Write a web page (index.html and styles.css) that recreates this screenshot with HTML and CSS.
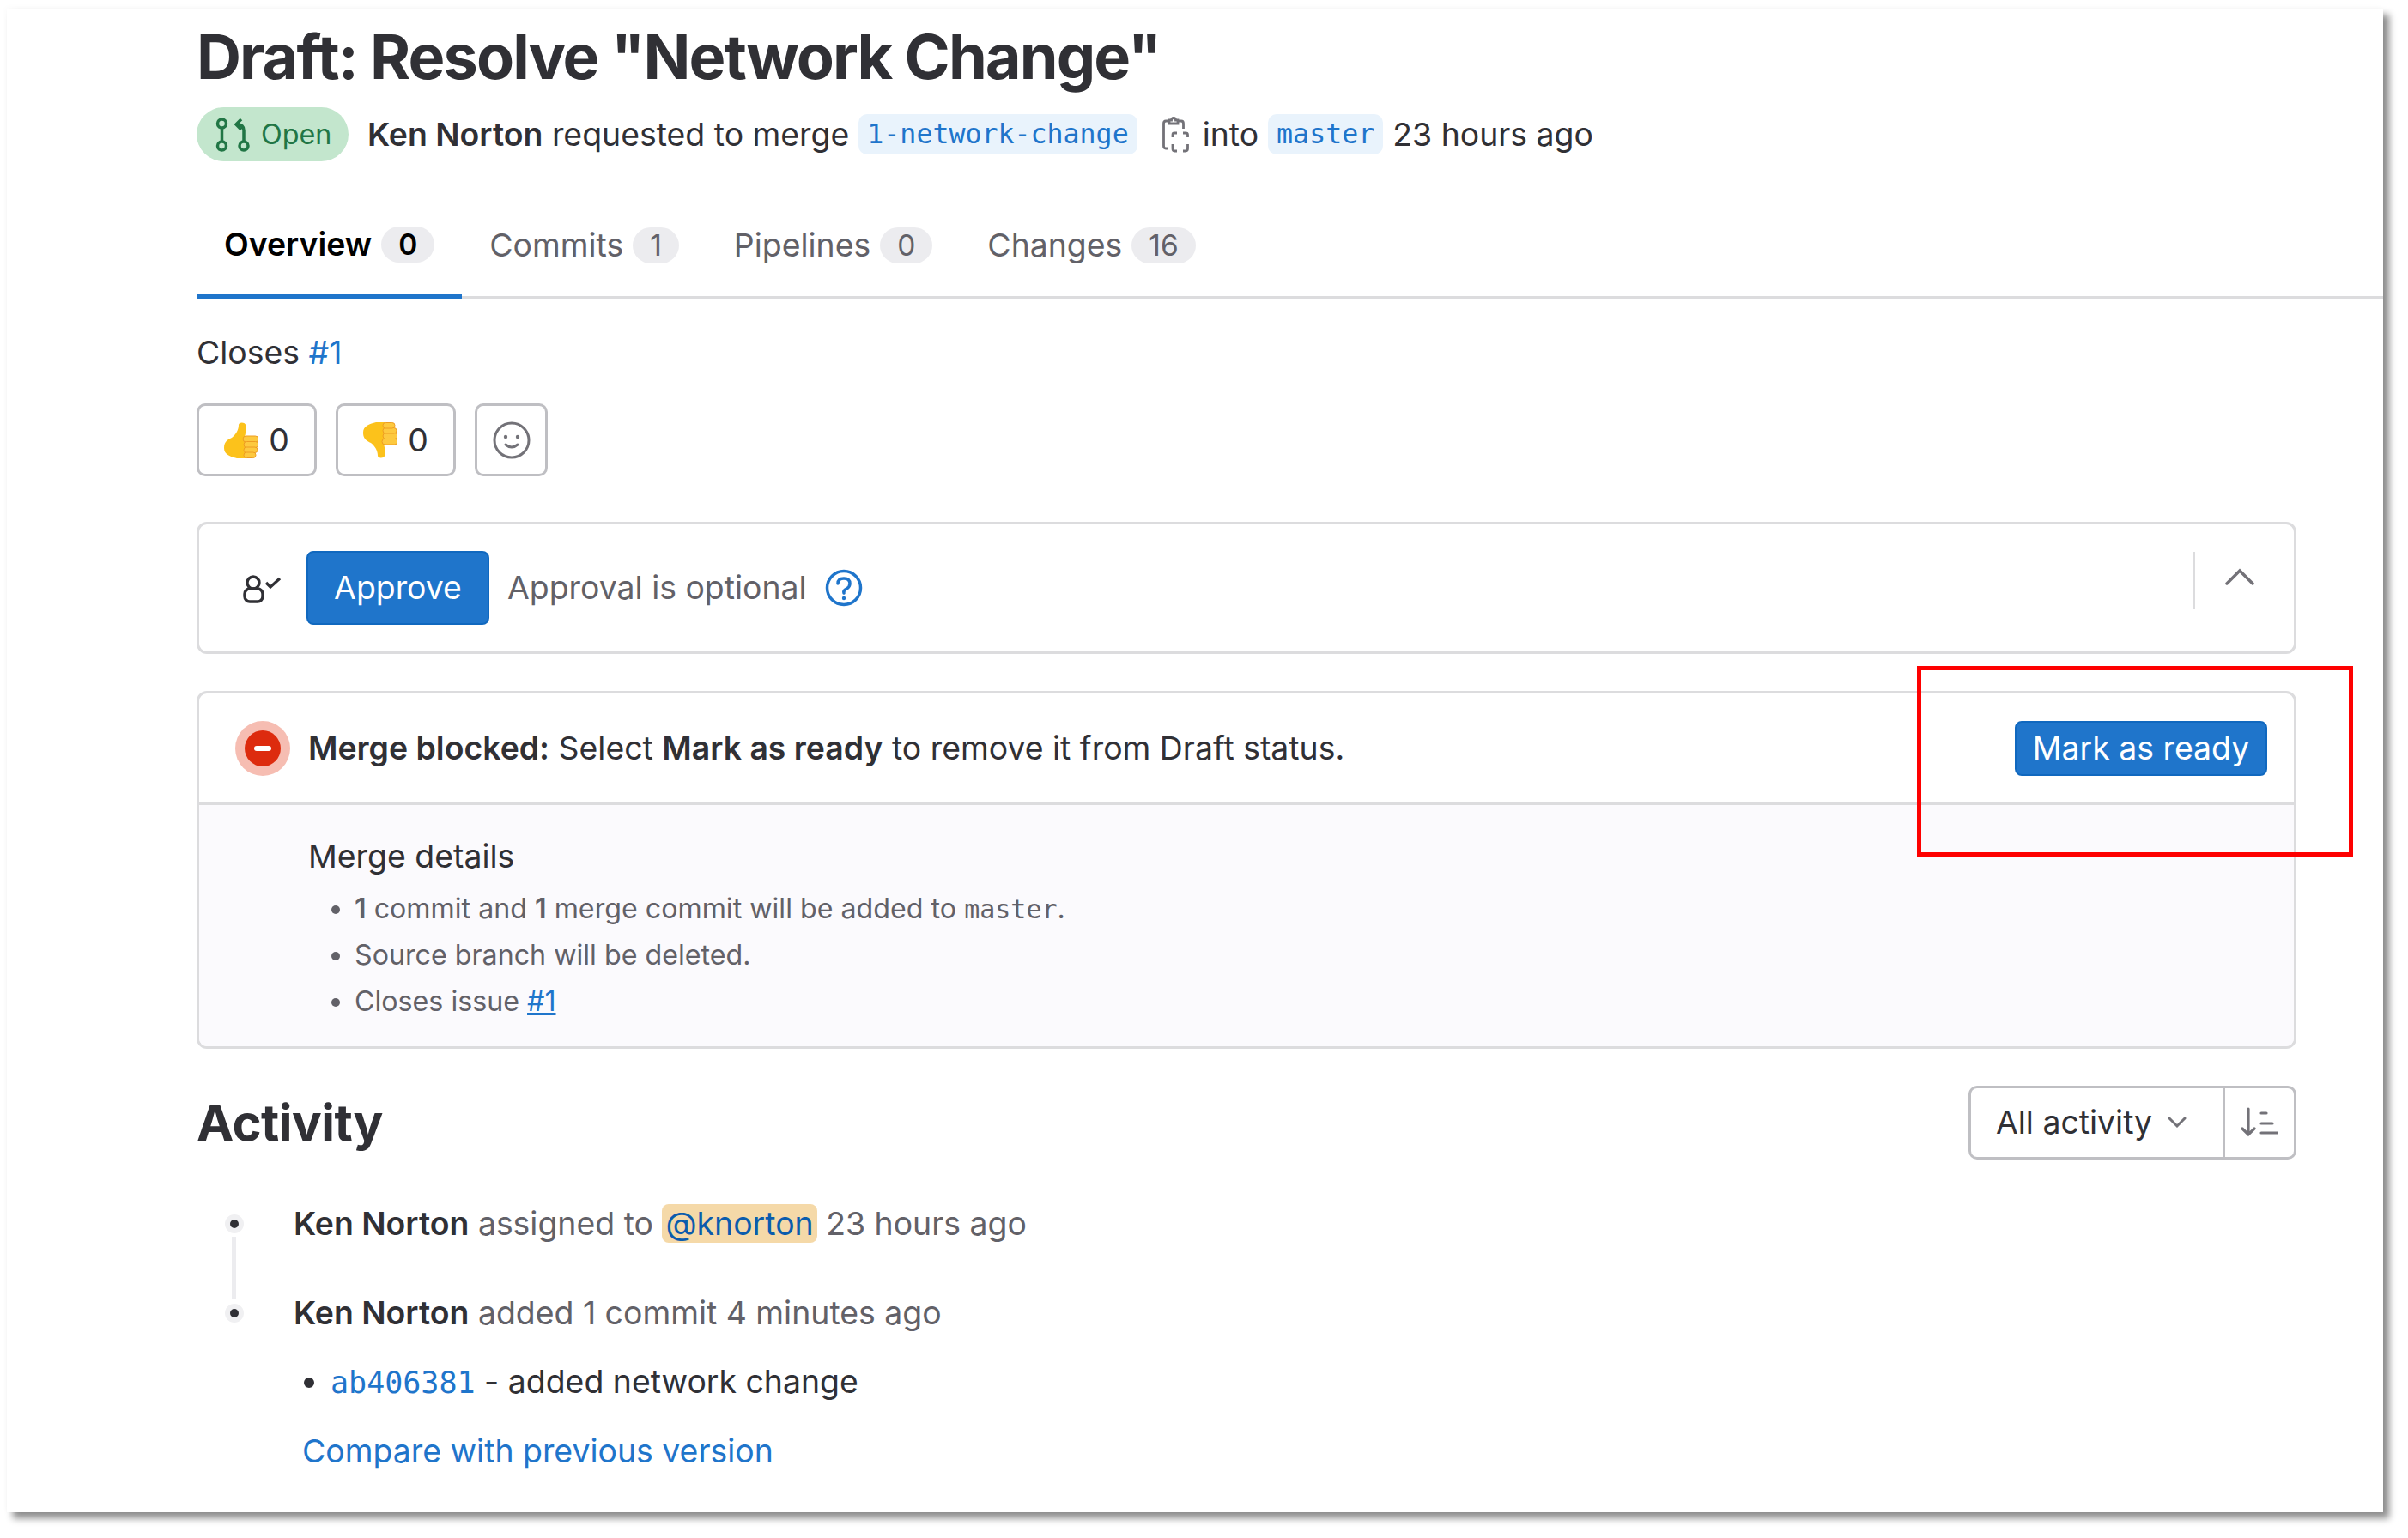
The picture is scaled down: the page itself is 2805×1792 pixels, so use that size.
FILE: index.html
```html
<!DOCTYPE html>
<html lang="en">
<head>
    <meta charset="UTF-8">
    <title>Draft: Resolve "Network Change"</title>
    <link rel="stylesheet" href="styles.css">
</head>
<body>
    <div class="window">
        <div class="page">
            <h1 class="title">Draft: Resolve "Network Change"</h1>

            <div class="meta">
                <span class="status-pill">
                    <svg class="status-icon" viewBox="0 0 40 40" fill="none" stroke="currentColor" stroke-width="3.500">
                        <circle cx="7.500" cy="7" r="5"/>
                        <circle cx="7.500" cy="33" r="5"/>
                        <circle cx="33" cy="33" r="5"/>
                        <path d="M7.500 12V28"/>
                        <path d="M33 28V15Q33 8 25 8M30 2L24 8L30 14"/>
                    </svg>
                    Open
                </span>
                <span><b class="author">Ken Norton</b> requested to merge</span>
                <a class="ref">1-network-change</a>
                <svg class="copy-icon" viewBox="0 0 31 42" fill="none" stroke="#737278" stroke-width="2.800">
                    <path d="M8 5H4Q1.500 5 1.500 8V34Q1.500 37 4 37H7"/>
                    <path d="M18 5H22Q24.500 5 24.500 8V14"/>
                    <path d="M8 8V4H10.500Q10.500 1.500 13 1.500T15.500 4H18V8Z"/>
                    <path d="M12 24V21Q12 19 14 19H17M24 19H27Q29.500 19 29.500 21V24M29.500 32V37Q29.500 40 27 40H24M17 40H14Q12 40 12 37V32"/>
                </svg>
                <span>into</span>
                <a class="ref">master</a>
                <span>23 hours ago</span>
            </div>

            <nav class="tabs">
                <a class="tab tab-active">Overview <span class="count">0</span></a>
                <a class="tab">Commits <span class="count">1</span></a>
                <a class="tab">Pipelines <span class="count">0</span></a>
                <a class="tab">Changes <span class="count">16</span></a>
            </nav>

            <div class="narrow">
                <p class="closes">Closes <a class="link">#1</a></p>

                <div class="awards">
                    <button class="award">
                        <svg class="thumb" viewBox="0 0 40 42">
                            <path fill="#fcc21b" d="M0 30C0 22 5 20 9 18C14 14 17 9 17 3C17 -0.500 25 -0.500 25.500 4C26 9 25 13 24 17L26 42H15C8 40 0 38 0 30Z"/>
                            <g fill="#fdc93f" stroke="#ee9d22" stroke-width="1">
                                <rect x="22" y="16" width="18" height="7" rx="3.500"/>
                                <rect x="23" y="22.500" width="17" height="7" rx="3.500"/>
                                <rect x="23" y="29" width="16" height="6.500" rx="3.200"/>
                                <rect x="23" y="35" width="14" height="6.500" rx="3.200"/>
                            </g>
                        </svg>
                        0
                    </button>
                    <button class="award">
                        <svg class="thumb thumb-down" viewBox="0 0 40 42">
                            <path fill="#fcc21b" d="M0 30C0 22 5 20 9 18C14 14 17 9 17 3C17 -0.500 25 -0.500 25.500 4C26 9 25 13 24 17L26 42H15C8 40 0 38 0 30Z"/>
                            <g fill="#fdc93f" stroke="#ee9d22" stroke-width="1">
                                <rect x="22" y="16" width="18" height="7" rx="3.500"/>
                                <rect x="23" y="22.500" width="17" height="7" rx="3.500"/>
                                <rect x="23" y="29" width="16" height="6.500" rx="3.200"/>
                                <rect x="23" y="35" width="14" height="6.500" rx="3.200"/>
                            </g>
                        </svg>
                        0
                    </button>
                    <button class="award award-add">
                        <svg class="smile" viewBox="0 0 44 44" fill="none" stroke="#737278" stroke-width="3">
                            <circle cx="22" cy="22" r="20"/>
                            <circle cx="15" cy="18" r="2.200" fill="#737278" stroke="none"/>
                            <circle cx="29" cy="18" r="2.200" fill="#737278" stroke="none"/>
                            <path d="M15 27Q22 33 29 27" stroke-linecap="round"/>
                        </svg>
                    </button>
                </div>

                <section class="card approve-card">
                    <svg class="approvers" viewBox="0 0 46 34" fill="none" stroke="#303035" stroke-width="3.400">
                        <circle cx="12" cy="9" r="7"/>
                        <rect x="2" y="16" width="21" height="15" rx="6"/>
                        <path d="M27 9L32 14L43 4"/>
                    </svg>
                    <button class="btn-blue btn-approve">Approve</button>
                    <span class="optional">Approval is optional</span>
                    <svg class="help" viewBox="0 0 44 44" fill="none" stroke="#1f75cb" stroke-width="3.500">
                        <circle cx="22" cy="22" r="19.500"/>
                        <path d="M15 17Q15 11 22 11T29 17Q29 21 25 23T22 28" stroke-linecap="round"/>
                        <circle cx="22" cy="34" r="2.200" fill="#1f75cb" stroke="none"/>
                    </svg>
                    <div class="collapse">
                        <svg class="chevron-up" viewBox="0 0 34 20" fill="none" stroke="#737278" stroke-width="3.500" stroke-linecap="round">
                            <path d="M2 18L17 3L32 18"/>
                        </svg>
                    </div>
                </section>

                <section class="card merge-card">
                    <div class="merge-head">
                        <span class="blocked-icon"><span class="blocked-dot"><span class="blocked-bar"></span></span></span>
                        <p class="merge-msg"><b>Merge blocked:</b> Select <b>Mark as ready</b> to remove it from Draft status.</p>
                        <button class="btn-blue btn-ready">Mark as ready</button>
                    </div>
                    <div class="merge-details">
                        <h2 class="details-title">Merge details</h2>
                        <ul class="details-list">
                            <li><b>1</b> commit and <b>1</b> merge commit will be added to <code>master</code>.</li>
                            <li>Source branch will be deleted.</li>
                            <li>Closes issue <a class="link link-under">#1</a></li>
                        </ul>
                    </div>
                </section>

                <div class="activity-head">
                    <h2 class="activity-title">Activity</h2>
                    <div class="filter">
                        <span class="filter-main">
                            All activity
                            <svg class="chevron-down" viewBox="0 0 22 14" fill="none" stroke="#737278" stroke-width="3" stroke-linecap="round">
                                <path d="M2 2L11 11L20 2"/>
                            </svg>
                        </span>
                        <span class="filter-sort">
                            <svg class="sort-icon" viewBox="0 0 44 36" fill="none" stroke="#737278" stroke-width="3.200" stroke-linecap="round">
                                <path d="M9 2V32M2 25L9 32L16 25"/>
                                <path d="M24 7H30M24 19H37M24 30H43"/>
                            </svg>
                        </span>
                    </div>
                </div>

                <ul class="timeline">
                    <li class="note note-line">
                        <span class="note-dot"></span>
                        <span class="note-text"><b>Ken Norton</b> assigned to <a class="mention">@knorton</a> 23 hours ago</span>
                    </li>
                    <li class="note">
                        <span class="note-dot"></span>
                        <span class="note-text"><b>Ken Norton</b> added 1 commit 4 minutes ago</span>
                    </li>
                </ul>
                <ul class="commits">
                    <li><a class="sha">ab406381</a> - added network change</li>
                </ul>
                <a class="link compare">Compare with previous version</a>
            </div>
        </div>

        <div class="highlight"></div>
    </div>
</body>
</html>
```

FILE: styles.css
```css
/* screenshot frame */
* {
    box-sizing: border-box;
}

html, body {
    height: 100%;
}

body {
    margin: 0;
    background: #fff;
    overflow: hidden;
    font-family: Inter, "Noto Sans", sans-serif;
    font-size: 37.4px;
    line-height: 50px;
    color: #303035;
}

.window {
    position: relative;
    margin: 10px 0 0 8px;
    width: 2768px;
    height: 1752px;
    background: #fff;
    box-shadow: 7px 7px 8px rgba(0, 0, 0, 0.45), -2px -2px 6px rgba(0, 0, 0, 0.02);
}

.page {
    padding: 16px 0 0 221px;
}

.narrow {
    margin-right: 101px;
}

/* header */
.title {
    margin: 0;
    font-size: 72px;
    line-height: 80px;
    font-weight: 700;
    letter-spacing: -1.9px;
}

.meta {
    display: flex;
    align-items: center;
    gap: 11px;
    height: 63px;
    margin-top: 19px;
}

.status-pill {
    display: inline-flex;
    align-items: center;
    gap: 13px;
    width: 177px;
    height: 63px;
    padding-left: 22px;
    margin-right: 11px;
    border-radius: 32px;
    background: #c3e6cd;
    color: #217645;
    font-size: 32.3px;
}

.status-icon {
    width: 40px;
    height: 40px;
}

.author {
    font-weight: 600;
}

.ref {
    padding: 0 10px;
    height: 47px;
    line-height: 47px;
    border-radius: 10px;
    background: #e9f3fc;
    color: #1f75cb;
    font-family: "DejaVu Sans Mono", monospace;
    font-size: 31.6px;
}

.copy-icon {
    width: 31px;
    height: 42px;
    margin: 0 5px 0 18px;
}

/* tabs */
.tabs {
    display: flex;
    height: 124px;
    margin-top: 36px;
    border-bottom: 3px solid #dcdcde;
}

.tab {
    display: flex;
    align-items: center;
    gap: 11px;
    height: 124px;
    padding: 0 32px;
    color: #626168;
}

.tab-active {
    color: #000;
    font-weight: 600;
    border-bottom: 6px solid #1f75cb;
    padding-top: 3px;
}

.count {
    height: 42px;
    padding: 0 20px;
    border-radius: 21px;
    background: #ececef;
    font-size: 33.5px;
    line-height: 42px;
    text-align: center;
}

/* reactions */
.closes {
    margin: 38px 0 0;
}

.link {
    color: #1f75cb;
}

.link-under {
    text-decoration: underline;
}

.awards {
    display: flex;
    gap: 22px;
    margin-top: 34px;
}

.award {
    display: flex;
    align-items: center;
    justify-content: center;
    gap: 12px;
    width: 140px;
    height: 85px;
    padding: 0;
    background: #fff;
    border: 3px solid #bfbfc3;
    border-radius: 10px;
    font: inherit;
    color: #303035;
}

.award-add {
    width: 85px;
}

.thumb {
    width: 40px;
    height: 44px;
}

.thumb-down {
    transform: scaleY(-1);
}

.smile {
    width: 44px;
    height: 44px;
}

/* cards */
.card {
    border: 3px solid #dcdcde;
    border-radius: 12px;
}

.approve-card {
    display: flex;
    align-items: center;
    height: 154px;
    margin-top: 53px;
    padding-left: 51px;
}

.approvers {
    width: 46px;
    height: 34px;
    margin: 3px 28px 0 0;
}

.btn-blue {
    background: #1f75cb;
    border: 2px solid #1068bf;
    border-radius: 8px;
    color: #fff;
    font: inherit;
    padding: 0;
}

.btn-approve {
    width: 213px;
    height: 86px;
}

.optional {
    margin-left: 21px;
    color: #626168;
}

.help {
    width: 44px;
    height: 44px;
    margin-left: 21px;
}

.collapse {
    display: flex;
    align-items: center;
    justify-content: center;
    align-self: flex-start;
    height: 66px;
    width: 117px;
    margin: 32px 0 0 auto;
    padding: 0 11px 8px 0;
    border-left: 2px solid #dcdcde;
}

.chevron-up {
    width: 34px;
    height: 20px;
}

.merge-card {
    margin-top: 43px;
    height: 417px;
    overflow: hidden;
}

.merge-head {
    display: flex;
    align-items: center;
    height: 130px;
    padding: 0 31px 0 42px;
    border-bottom: 3px solid #dcdcde;
}

.blocked-icon {
    display: flex;
    align-items: center;
    justify-content: center;
    width: 64px;
    height: 64px;
    border-radius: 50%;
    background: #f6bdb2;
}

.blocked-dot {
    display: flex;
    align-items: center;
    justify-content: center;
    width: 42px;
    height: 42px;
    border-radius: 50%;
    background: #dd2b0e;
}

.blocked-bar {
    width: 20px;
    height: 6px;
    border-radius: 3px;
    background: #fff;
}

.merge-msg {
    margin: 0 0 0 21px;
}

.merge-msg b {
    font-weight: 600;
}

.btn-ready {
    width: 294px;
    height: 64px;
    margin-left: auto;
    line-height: 58px;
}

.merge-details {
    height: 284px;
    padding: 35px 0 0 127px;
    background: #fbfafd;
}

.details-title {
    margin: 0;
    font-size: 37.4px;
    line-height: 50px;
    font-weight: 400;
}

.details-list {
    margin: 9px 0 0;
    padding: 0 0 0 54px;
    color: #626168;
    font-size: 32.2px;
}

.details-list li {
    height: 53.8px;
    line-height: 53.8px;
}

.details-list b {
    font-weight: 600;
}

.details-list code {
    font-family: "DejaVu Sans Mono", monospace;
    font-size: 30px;
    line-height: 1;
}

/* activity */
.activity-head {
    display: flex;
    align-items: center;
    justify-content: space-between;
    margin-top: 43px;
}

.activity-title {
    margin: 0;
    font-size: 58px;
    line-height: 70px;
    font-weight: 700;
    letter-spacing: -0.5px;
}

.filter {
    display: flex;
    height: 86px;
    width: 382px;
    border: 3px solid #bfbfc3;
    border-radius: 10px;
}

.filter-main {
    display: flex;
    align-items: center;
    gap: 18px;
    width: 296px;
    padding-left: 29px;
    border-right: 3px solid #bfbfc3;
}

.chevron-down {
    width: 22px;
    height: 14px;
}

.filter-sort {
    display: flex;
    flex: 1;
    align-items: center;
    justify-content: center;
}

.sort-icon {
    width: 44px;
    height: 36px;
}

.timeline {
    list-style: none;
    margin: 50px 0 0;
    padding: 0;
}

.note {
    position: relative;
    display: flex;
    align-items: center;
    height: 50px;
    padding-left: 33px;
    color: #626168;
}

.note + .note {
    margin-top: 54px;
}

.note b {
    color: #303035;
    font-weight: 600;
}

.note-line::after {
    content: "";
    position: absolute;
    left: 41px;
    top: 40px;
    width: 5px;
    height: 72px;
    background: #ececef;
}

.note-dot {
    position: relative;
    z-index: 1;
    display: flex;
    flex: none;
    width: 22px;
    height: 22px;
    margin-right: 58px;
    border: 6px solid #f0f0f2;
    border-radius: 50%;
    background: #303035;
}

.mention {
    padding: 0 4px;
    border-radius: 8px;
    background: #f5d9a8;
    color: #0b5cad;
}

.commits {
    margin: 30px 0 0;
    padding: 0 0 0 156px;
}

.commits li {
    height: 50px;
}

.sha {
    color: #1f75cb;
    font-family: "DejaVu Sans Mono", monospace;
    font-size: 35px;
    line-height: 1;
}

.compare {
    display: block;
    margin: 31px 0 0 123px;
}

/* red box drawn over the screenshot */
.highlight {
    position: absolute;
    left: 2225px;
    top: 766px;
    width: 508px;
    height: 222px;
    border: 5px solid #fe0000;
}
```
